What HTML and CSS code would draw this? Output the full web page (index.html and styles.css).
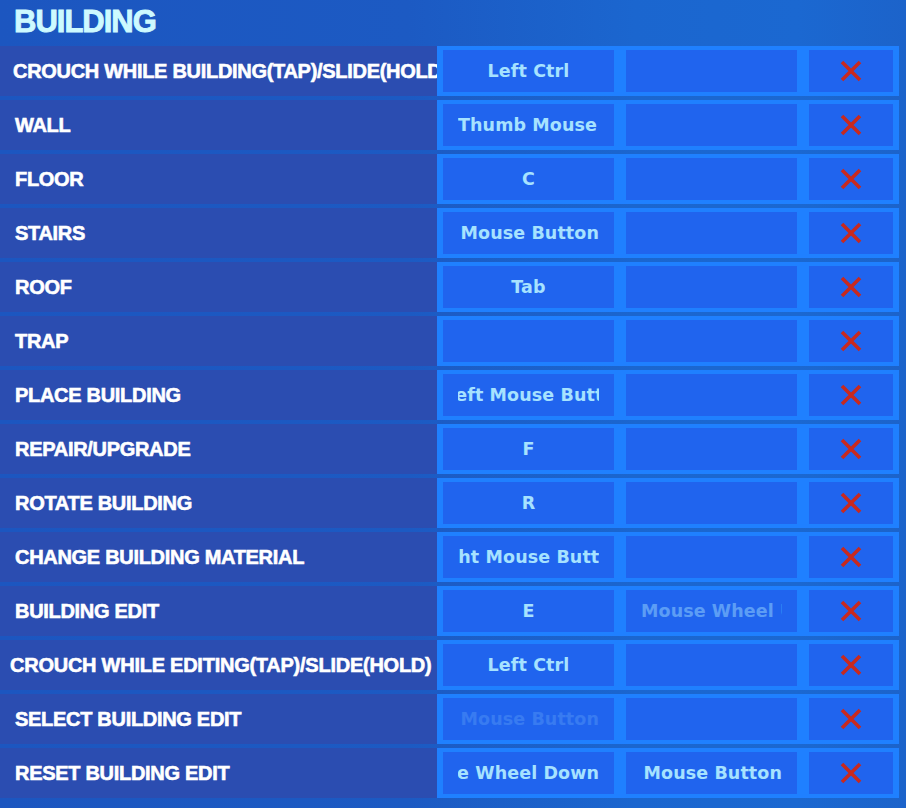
FILE: index.html
```html
<!DOCTYPE html>
<html>
<head>
<meta charset="utf-8">
<link rel="stylesheet" href="styles.css">
</head>
<body>
<div class="page">
  <h1 class="title">BUILDING</h1>
  <div class="list">
    <div class="row">
      <div class="label label-tight">CROUCH WHILE BUILDING(TAP)/SLIDE(HOLD)</div>
      <div class="keys">
        <div class="cell"><div class="clip"><span class="key">Left Ctrl</span></div></div>
        <div class="cell"><div class="clip"></div></div>
        <div class="cell cell-x"><svg class="xicon" viewBox="0 0 22 22"><path d="M2 2L20 20M20 2L2 20"/></svg></div>
      </div>
    </div>
    <div class="row">
      <div class="label">WALL</div>
      <div class="keys">
        <div class="cell"><div class="clip clip-start"><span class="key">Thumb Mouse Button</span></div></div>
        <div class="cell"><div class="clip"></div></div>
        <div class="cell cell-x"><svg class="xicon" viewBox="0 0 22 22"><path d="M2 2L20 20M20 2L2 20"/></svg></div>
      </div>
    </div>
    <div class="row">
      <div class="label">FLOOR</div>
      <div class="keys">
        <div class="cell"><div class="clip"><span class="key">C</span></div></div>
        <div class="cell"><div class="clip"></div></div>
        <div class="cell cell-x"><svg class="xicon" viewBox="0 0 22 22"><path d="M2 2L20 20M20 2L2 20"/></svg></div>
      </div>
    </div>
    <div class="row">
      <div class="label">STAIRS</div>
      <div class="keys">
        <div class="cell"><div class="clip clip-end"><span class="key">Thumb Mouse Button</span></div></div>
        <div class="cell"><div class="clip"></div></div>
        <div class="cell cell-x"><svg class="xicon" viewBox="0 0 22 22"><path d="M2 2L20 20M20 2L2 20"/></svg></div>
      </div>
    </div>
    <div class="row">
      <div class="label">ROOF</div>
      <div class="keys">
        <div class="cell"><div class="clip"><span class="key">Tab</span></div></div>
        <div class="cell"><div class="clip"></div></div>
        <div class="cell cell-x"><svg class="xicon" viewBox="0 0 22 22"><path d="M2 2L20 20M20 2L2 20"/></svg></div>
      </div>
    </div>
    <div class="row">
      <div class="label">TRAP</div>
      <div class="keys">
        <div class="cell"><div class="clip"></div></div>
        <div class="cell"><div class="clip"></div></div>
        <div class="cell cell-x"><svg class="xicon" viewBox="0 0 22 22"><path d="M2 2L20 20M20 2L2 20"/></svg></div>
      </div>
    </div>
    <div class="row">
      <div class="label">PLACE BUILDING</div>
      <div class="keys">
        <div class="cell"><div class="clip clip-start"><span class="key scroll-left">Left Mouse Button</span></div></div>
        <div class="cell"><div class="clip"></div></div>
        <div class="cell cell-x"><svg class="xicon" viewBox="0 0 22 22"><path d="M2 2L20 20M20 2L2 20"/></svg></div>
      </div>
    </div>
    <div class="row">
      <div class="label">REPAIR/UPGRADE</div>
      <div class="keys">
        <div class="cell"><div class="clip"><span class="key">F</span></div></div>
        <div class="cell"><div class="clip"></div></div>
        <div class="cell cell-x"><svg class="xicon" viewBox="0 0 22 22"><path d="M2 2L20 20M20 2L2 20"/></svg></div>
      </div>
    </div>
    <div class="row">
      <div class="label">ROTATE BUILDING</div>
      <div class="keys">
        <div class="cell"><div class="clip"><span class="key">R</span></div></div>
        <div class="cell"><div class="clip"></div></div>
        <div class="cell cell-x"><svg class="xicon" viewBox="0 0 22 22"><path d="M2 2L20 20M20 2L2 20"/></svg></div>
      </div>
    </div>
    <div class="row">
      <div class="label">CHANGE BUILDING MATERIAL</div>
      <div class="keys">
        <div class="cell"><div class="clip clip-start"><span class="key scroll-right">Right Mouse Button</span></div></div>
        <div class="cell"><div class="clip"></div></div>
        <div class="cell cell-x"><svg class="xicon" viewBox="0 0 22 22"><path d="M2 2L20 20M20 2L2 20"/></svg></div>
      </div>
    </div>
    <div class="row">
      <div class="label">BUILDING EDIT</div>
      <div class="keys">
        <div class="cell"><div class="clip"><span class="key">E</span></div></div>
        <div class="cell"><div class="clip clip-start"><span class="key fade">Mouse Wheel Up</span></div></div>
        <div class="cell cell-x"><svg class="xicon" viewBox="0 0 22 22"><path d="M2 2L20 20M20 2L2 20"/></svg></div>
      </div>
    </div>
    <div class="row">
      <div class="label label-tighter">CROUCH WHILE EDITING(TAP)/SLIDE(HOLD)</div>
      <div class="keys">
        <div class="cell"><div class="clip"><span class="key">Left Ctrl</span></div></div>
        <div class="cell"><div class="clip"></div></div>
        <div class="cell cell-x"><svg class="xicon" viewBox="0 0 22 22"><path d="M2 2L20 20M20 2L2 20"/></svg></div>
      </div>
    </div>
    <div class="row">
      <div class="label">SELECT BUILDING EDIT</div>
      <div class="keys">
        <div class="cell"><div class="clip clip-end"><span class="key faint">Thumb Mouse Button</span></div></div>
        <div class="cell"><div class="clip"></div></div>
        <div class="cell cell-x"><svg class="xicon" viewBox="0 0 22 22"><path d="M2 2L20 20M20 2L2 20"/></svg></div>
      </div>
    </div>
    <div class="row">
      <div class="label">RESET BUILDING EDIT</div>
      <div class="keys">
        <div class="cell"><div class="clip clip-end"><span class="key">Mouse Wheel Down</span></div></div>
        <div class="cell"><div class="clip clip-end"><span class="key">Thumb Mouse Button</span></div></div>
        <div class="cell cell-x"><svg class="xicon" viewBox="0 0 22 22"><path d="M2 2L20 20M20 2L2 20"/></svg></div>
      </div>
    </div>
  </div>
</div>
</body>
</html>
```
FILE: styles.css
```css
* { box-sizing: border-box; }
html, body {
  margin: 0;
  padding: 0;
}
body {
  width: 906px;
  height: 808px;
  overflow: hidden;
  background: linear-gradient(90deg, #1c56c0 0%, #1c5ac3 45%, #1b66cf 70%, #1b68d1 88%, #1c63ca 100%);
  font-family: "Liberation Sans", Arial, sans-serif;
}
.page {
  display: flex;
  flex-direction: column;
}
.title {
  margin: 0;
  height: 46px;
  padding: 6px 0 0 14px;
  font-family: "Liberation Sans", Arial, sans-serif;
  font-weight: 700;
  font-size: 31px;
  line-height: 31px;
  letter-spacing: -1px;
  color: #cdfaff;
  -webkit-text-stroke: 0.9px #cdfaff;
}
.list {
  display: flex;
  flex-direction: column;
  gap: 4px;
}
.row {
  display: flex;
  height: 50px;
  padding-right: 7px;
}
.label {
  width: 437px;
  flex: none;
  background: #2b4db1;
  display: flex;
  align-items: center;
  padding-left: 15px;
  overflow: hidden;
  white-space: nowrap;
  color: #ffffff;
  font-weight: 700;
  font-size: 20px;
  letter-spacing: -0.3px;
  -webkit-text-stroke: 0.6px #ffffff;
}
.label-tight { padding-left: 13px; }
.label-tighter { padding-left: 10px; letter-spacing: -0.25px; }
.keys {
  flex: 1;
  display: flex;
  gap: 12px;
  padding: 4px 6px;
  background: #1f80ff;
}
.cell {
  width: 171px;
  flex: none;
  background: #2064ee;
  display: flex;
  padding: 0 15px;
}
.cell-x {
  width: 84px;
  padding: 0;
  align-items: center;
  justify-content: center;
}
.clip {
  flex: 1;
  min-width: 0;
  overflow: hidden;
  display: flex;
  align-items: center;
  justify-content: center;
}
.clip-start { justify-content: flex-start; }
.clip-end { justify-content: flex-end; }
.key {
  flex: none;
  white-space: nowrap;
  font-family: "DejaVu Sans", sans-serif;
  font-weight: 700;
  font-size: 17.5px;
  letter-spacing: 0.1px;
  color: #a6e2ff;
}
.scroll-left { margin-left: -14px; }
.scroll-right { margin-left: -32px; }
.fade { opacity: 0.45; }
.faint { opacity: 0.18; }
.xicon {
  width: 22px;
  height: 22px;
  display: block;
}
.xicon path {
  fill: none;
  stroke: #c8291f;
  stroke-width: 3.6;
  stroke-linecap: butt;
}
```
